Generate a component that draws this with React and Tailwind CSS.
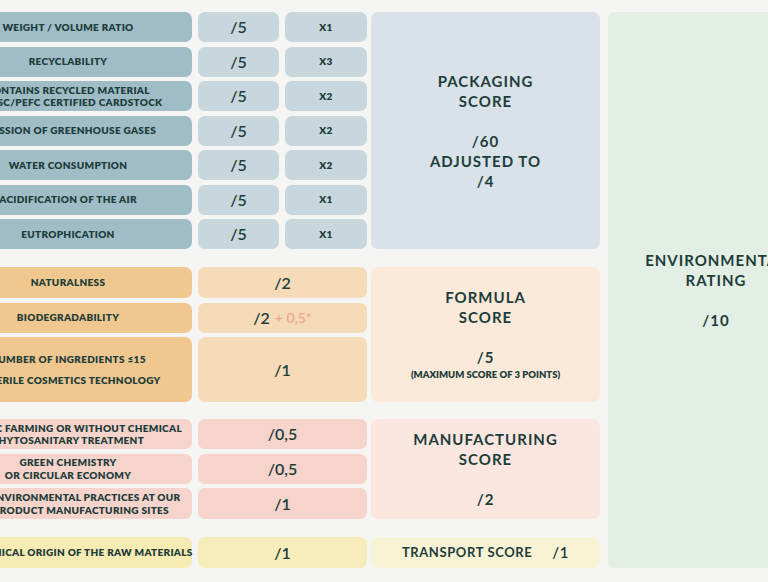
import React from "react";

const font = { fontFamily: "Lato, 'Noto Sans', sans-serif" };

function Label({ children, className = "" }) {
  return (
    <div
      className={
        "flex flex-col items-center justify-center whitespace-nowrap rounded-[7px] text-center text-[10px] font-extrabold leading-[12.5px] tracking-[0.3px] text-[#1d3d3a] " +
        className
      }
    >
      {children}
    </div>
  );
}

function Score({ children, className = "" }) {
  return (
    <div
      className={
        "flex items-center justify-center rounded-[7px] text-[16px] font-semibold text-[#1d3d3a] " +
        className
      }
    >
      {children}
    </div>
  );
}

function Mult({ children }) {
  return (
    <div className="flex items-center justify-center rounded-[7px] bg-[#c8d6dd] text-[10px] font-extrabold tracking-[0.5px] text-[#1d3d3a]">
      {children}
    </div>
  );
}

const packRows = [
  [["WEIGHT / VOLUME RATIO"], "X1"],
  [["RECYCLABILITY"], "X3"],
  [["CONTAINS RECYCLED MATERIAL", "OR FSC/PEFC CERTIFIED CARDSTOCK"], "X2"],
  [["EMISSION OF GREENHOUSE GASES"], "X2"],
  [["WATER CONSUMPTION"], "X2"],
  [["ACIDIFICATION OF THE AIR"], "X1"],
  [["EUTROPHICATION"], "X1"],
];

export default function App() {
  return (
    <div className="h-[582px] w-[768px] overflow-hidden bg-[#f5f5f4]" style={font}>
      <div className="ml-[-56px] flex w-[880px] gap-[8px] pt-[12px]">
        <div className="flex flex-col">
          {/* Packaging */}
          <div className="flex gap-[4px]">
            <div className="flex flex-col gap-[4.5px]">
              {packRows.map(([lines, m], i) => (
                <div key={i} className="grid h-[30px] grid-cols-[248px_81px_82px] gap-x-[6px]">
                  <Label className="bg-[#a0bcc7]">
                    {lines.map((l) => (
                      <span key={l}>{l}</span>
                    ))}
                  </Label>
                  <Score className="bg-[#c8d6dd]">/5</Score>
                  <Mult>{m}</Mult>
                </div>
              ))}
            </div>
            <div className="flex w-[229px] flex-col items-center justify-center rounded-[7px] bg-[#d9e2e9] text-center text-[15px] font-bold leading-[20px] tracking-[1px] text-[#1d3d3a]">
              <span>PACKAGING</span>
              <span>SCORE</span>
              <span className="h-[20px]" />
              <span>/60</span>
              <span>ADJUSTED TO</span>
              <span>/4</span>
            </div>
          </div>

          {/* Formula */}
          <div className="mt-[18px] flex gap-[4px]">
            <div className="flex flex-col gap-[4.5px]">
              <div className="grid h-[31px] grid-cols-[248px_169px] gap-x-[6px]">
                <Label className="bg-[#f0c88f]">NATURALNESS</Label>
                <Score className="bg-[#f6dbb8]">/2</Score>
              </div>
              <div className="grid h-[30px] grid-cols-[248px_169px] gap-x-[6px]">
                <Label className="bg-[#f0c88f]">BIODEGRADABILITY</Label>
                <Score className="bg-[#f6dbb8]">
                  /2<span className="ml-[5px] text-[14px] font-semibold text-[#eba88c]">+ 0,5*</span>
                </Score>
              </div>
              <div className="grid h-[65px] grid-cols-[248px_169px] gap-x-[6px]">
                <Label className="bg-[#f0c88f] leading-[21px]">
                  <span>NUMBER OF INGREDIENTS ≤15</span>
                  <span>+ STERILE COSMETICS TECHNOLOGY</span>
                </Label>
                <Score className="bg-[#f6dbb8]">/1</Score>
              </div>
            </div>
            <div className="flex w-[229px] flex-col items-center justify-center rounded-[7px] bg-[#fbe9d9] text-center text-[15px] font-bold leading-[20px] tracking-[1px] text-[#1d3d3a]">
              <span>FORMULA</span>
              <span>SCORE</span>
              <span className="h-[20px]" />
              <span>/5</span>
              <span className="text-[9.5px] font-extrabold leading-[16px] tracking-[0px]">(MAXIMUM SCORE OF 3 POINTS)</span>
            </div>
          </div>

          {/* Manufacturing */}
          <div className="mt-[17px] flex gap-[4px]">
            <div className="flex flex-col gap-[4.5px]">
              <div className="grid h-[30px] grid-cols-[248px_169px] gap-x-[6px]">
                <Label className="bg-[#f6d3cb]">
                  <span>ORGANIC FARMING OR WITHOUT CHEMICAL</span>
                  <span>PHYTOSANITARY TREATMENT</span>
                </Label>
                <Score className="bg-[#f6d3cb]">/0,5</Score>
              </div>
              <div className="grid h-[30px] grid-cols-[248px_169px] gap-x-[6px]">
                <Label className="bg-[#f6d3cb]">
                  <span>GREEN CHEMISTRY</span>
                  <span>OR CIRCULAR ECONOMY</span>
                </Label>
                <Score className="bg-[#f6d3cb]">/0,5</Score>
              </div>
              <div className="grid h-[31px] grid-cols-[248px_169px] gap-x-[6px]">
                <Label className="bg-[#f6d3cb]">
                  <span>GOOD ENVIRONMENTAL PRACTICES AT OUR</span>
                  <span>AND PRODUCT MANUFACTURING SITES</span>
                </Label>
                <Score className="bg-[#f6d3cb]">/1</Score>
              </div>
            </div>
            <div className="flex w-[229px] flex-col items-center justify-center rounded-[7px] bg-[#fce7e0] text-center text-[15px] font-bold leading-[20px] tracking-[1px] text-[#1d3d3a]">
              <span>MANUFACTURING</span>
              <span>SCORE</span>
              <span className="h-[20px]" />
              <span>/2</span>
            </div>
          </div>

          {/* Transport */}
          <div className="mt-[18px] flex h-[31px] gap-[4px]">
            <div className="grid grid-cols-[248px_169px] gap-x-[6px]">
              <Label className="bg-[#f6ebb3]">GEOGRAPHICAL ORIGIN OF THE RAW MATERIALS</Label>
              <Score className="bg-[#f7edbb]">/1</Score>
            </div>
            <div className="flex w-[229px] items-center justify-center gap-[20px] rounded-[7px] bg-[#f8f3d5] text-[13px] font-bold tracking-[0.6px] text-[#1d3d3a]">
              <span>TRANSPORT SCORE</span>
              <span className="text-[15px] font-semibold">/1</span>
            </div>
          </div>
        </div>

        {/* Environmental */}
        <div className="flex w-[216px] flex-col items-center justify-center rounded-[7px] bg-[#e3efe4] text-center text-[15px] font-bold leading-[20px] tracking-[1px] text-[#1d3d3a]">
          <span>ENVIRONMENTAL</span>
          <span>RATING</span>
          <span className="h-[20px]" />
          <span>/10</span>
        </div>
      </div>
    </div>
  );
}
